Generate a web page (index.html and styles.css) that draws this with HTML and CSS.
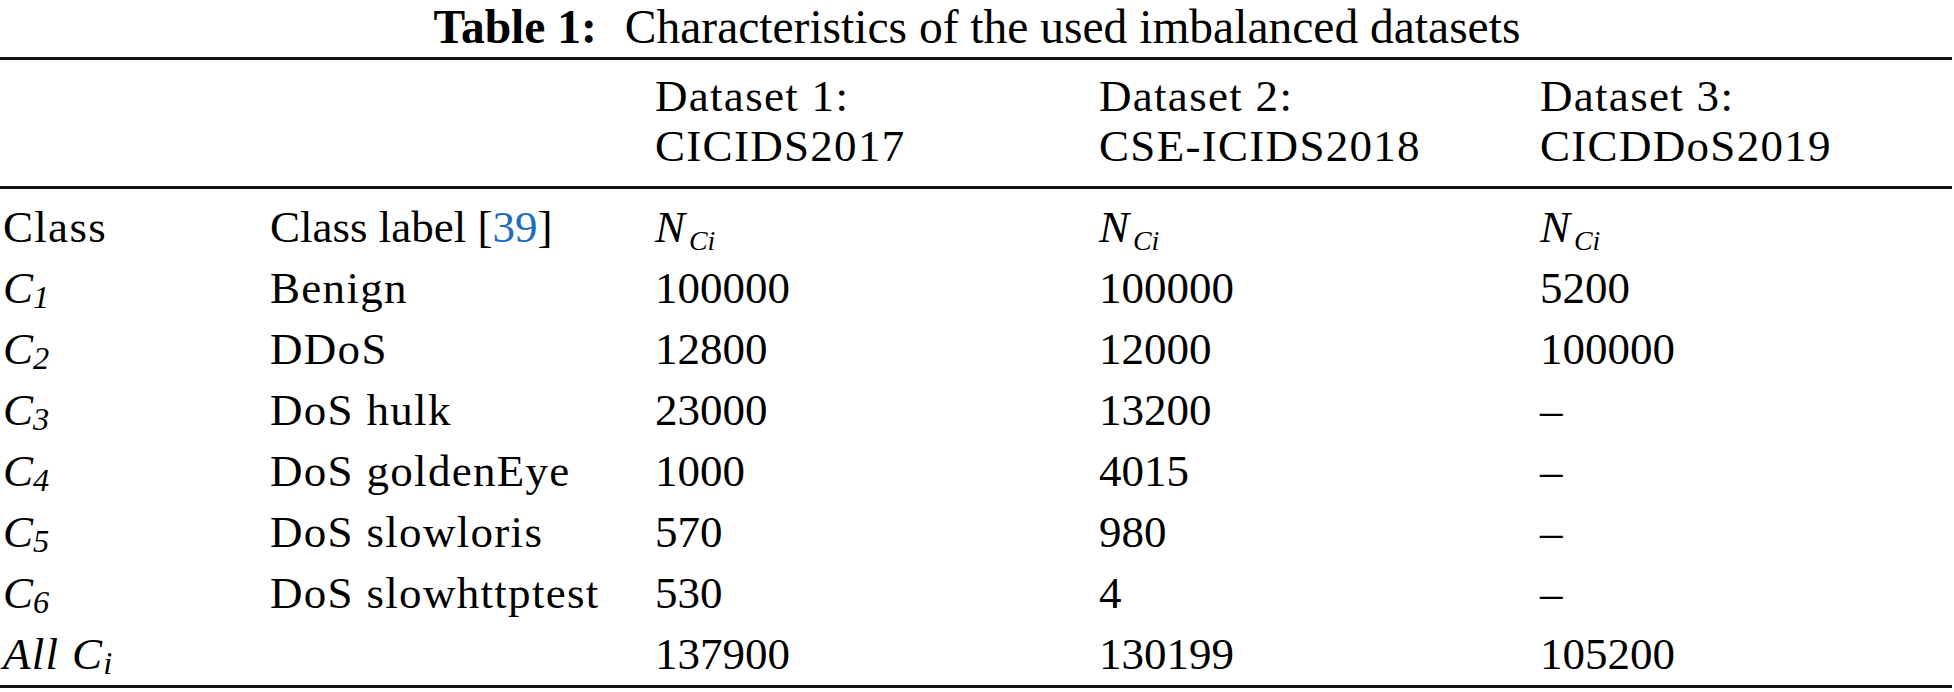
FILE: index.html
```html
<!DOCTYPE html>
<html lang="en">
<head>
<meta charset="utf-8">
<title>Table 1</title>
<link rel="stylesheet" href="styles.css">
</head>
<body>
<div class="title"><b>Table 1:</b><span class="gap"></span>Characteristics of the used imbalanced datasets</div>
<table class="data">
  <colgroup>
    <col class="c1"><col class="c2"><col class="c3"><col class="c4"><col class="c5">
  </colgroup>
  <thead>
    <tr class="head">
      <th></th>
      <th></th>
      <th class="w">Dataset 1:<br>CICIDS2017</th>
      <th class="w">Dataset 2:<br>CSE-ICIDS2018</th>
      <th class="w">Dataset 3:<br>CICDDoS2019</th>
    </tr>
  </thead>
  <tbody>
    <tr class="first">
      <td class="w">Class</td>
      <td>Class label [<span class="ref">39</span>]</td>
      <td><i>N</i><sub class="sb">Ci</sub></td>
      <td><i>N</i><sub class="sb">Ci</sub></td>
      <td><i>N</i><sub class="sb">Ci</sub></td>
    </tr>
    <tr><td><i>C</i><sub class="sd">1</sub></td><td class="w">Benign</td><td>100000</td><td>100000</td><td>5200</td></tr>
    <tr><td><i>C</i><sub class="sd">2</sub></td><td class="w">DDoS</td><td>12800</td><td>12000</td><td>100000</td></tr>
    <tr><td><i>C</i><sub class="sd">3</sub></td><td class="w">DoS hulk</td><td>23000</td><td>13200</td><td>–</td></tr>
    <tr><td><i>C</i><sub class="sd">4</sub></td><td class="w">DoS goldenEye</td><td>1000</td><td>4015</td><td>–</td></tr>
    <tr><td><i>C</i><sub class="sd">5</sub></td><td class="w">DoS slowloris</td><td>570</td><td>980</td><td>–</td></tr>
    <tr><td><i>C</i><sub class="sd">6</sub></td><td class="w">DoS slowhttptest</td><td>530</td><td>4</td><td>–</td></tr>
    <tr class="last"><td class="w"><i>All C</i><sub class="sd">i</sub></td><td></td><td>137900</td><td>130199</td><td>105200</td></tr>
  </tbody>
</table>
</body>
</html>
```
FILE: styles.css
```css
html, body {
  margin: 0;
  padding: 0;
  background: #ffffff;
}
body {
  font-family: "Liberation Serif", "Times New Roman", serif;
  color: #000000;
  font-size: 45px;
}
.title {
  text-align: center;
  line-height: normal;
  margin-bottom: 3px;
  font-size: 47.5px;
}
.title b {
  font-weight: bold;
}
.title .gap {
  display: inline-block;
  width: 28px;
}
.data {
  border-collapse: separate;
  border-spacing: 0;
  table-layout: fixed;
  width: 1952px;
}
.c1 { width: 267px; }
.c2 { width: 385px; }
.c3 { width: 444px; }
.c4 { width: 441px; }
.c5 { width: 415px; }
.data th, .data td {
  text-align: left;
  font-weight: normal;
  padding: 0 0 0 3px;
  white-space: nowrap;
  vertical-align: top;
}
.data .w {
  letter-spacing: 1.3px;
}
.head th {
  border-top: 3px solid #111;
  border-bottom: 3px solid #111;
  padding-top: 11px;
  padding-bottom: 15px;
  line-height: 50px;
}
.data td {
  line-height: 61px;
}
.first td {
  padding-top: 8px;
}
.last td {
  border-bottom: 3px solid #111;
}
.ref {
  color: #1f6dbf;
}
sub {
  line-height: 0;
  font-style: italic;
}
.sd {
  font-size: 0.72em;
  vertical-align: -0.14em;
}
.sb {
  font-size: 0.62em;
  vertical-align: -0.28em;
  margin-left: 4px;
}
```
